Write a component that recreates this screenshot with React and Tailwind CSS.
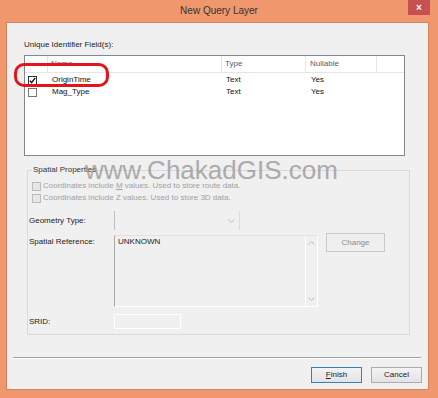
import React from 'react'

function Check({ checked, dark }) {
  return (
    <div className={`w-[9px] h-[9px] border bg-white flex items-center justify-center ${dark ? 'border-[#333]' : 'border-[#777]'}`}>
      {checked && (
        <svg width="7" height="7" viewBox="0 0 7 7">
          <polyline points="0.8,3.6 2.6,5.6 6.2,0.8" fill="none" stroke="#111" strokeWidth="1.4" />
        </svg>
      )}
    </div>
  )
}

function Chevron({ up }) {
  return (
    <svg width="7" height="4" viewBox="0 0 7 4">
      <polyline points={up ? '0.5,3.5 3.5,0.5 6.5,3.5' : '0.5,0.5 3.5,3.5 6.5,0.5'} fill="none" stroke="#b8b8b8" strokeWidth="1" />
    </svg>
  )
}

export default function App(){
  const rows = [
    { name: 'OriginTime', type: 'Text', nul: 'Yes', checked: true },
    { name: 'Mag_Type', type: 'Text', nul: 'Yes', checked: false },
  ]

  return (
    <div className="w-[438px] h-[398px] bg-[#f0976e] flex flex-col relative overflow-hidden font-['Liberation_Sans',Arial,sans-serif] text-[8px] leading-[10px] text-[#111]">
      {/* title bar */}
      <div className="h-[22px] flex items-center justify-center relative">
        <span className="text-[10px] leading-[12px] text-[#333]">New Query Layer</span>
        <div className="absolute right-[8px] top-0 w-[22px] h-[15px] bg-[#c75050] flex items-center justify-center text-white text-[10px] leading-[10px] font-bold">×</div>
      </div>

      <div className="flex flex-1">
        <div className="w-[6px]" />
        <div className="w-[423px] h-[368px] bg-[#f0f0f0] border border-[#d4845e] flex flex-col">
          <div className="ml-[17px] mt-[17px] text-[#222]">Unique Identifier Field(s):</div>

          {/* fields table */}
          <div className="relative ml-[17px] mt-[5px] w-[381px] h-[101px] border border-[#828790] bg-white">
            <div className="flex h-[17px] border-b border-[#e5e5e5] text-[#4c607a]">
              <div className="w-[23px] border-r border-[#e5e5e5]" />
              <div className="w-[174px] border-r border-[#e5e5e5] flex items-center pl-[3px]">Name</div>
              <div className="w-[84px] border-r border-[#e5e5e5] flex items-center pl-[3px]">Type</div>
              <div className="w-[71px] border-r border-[#e5e5e5] flex items-center pl-[4px]">Nullable</div>
              <div className="flex-1" />
            </div>
            <div className="pt-[1px]">
              {rows.map(r => (
                <div key={r.name} className="flex h-[12px] items-center">
                  <div className="w-[23px] pl-[3px]"><Check checked={r.checked} dark={r.checked} /></div>
                  <div className="w-[174px] pl-[4px]">{r.name}</div>
                  <div className="w-[84px] pl-[4px]">{r.type}</div>
                  <div className="w-[71px] pl-[5px]">{r.nul}</div>
                </div>
              ))}
            </div>
            <div className="absolute left-[-11px] top-[7px] w-[95px] h-[24px] border-[3px] border-[#e3151a] rounded-[10px]" />
          </div>

          {/* spatial properties */}
          <fieldset className="ml-[20px] mt-[9px] w-[383px] border border-[#d9d9d9] pb-[5px] flex flex-col">
            <legend className="ml-[4px] px-[1px] text-[#333] leading-[10px]">Spatial Properties</legend>
            <div className="flex items-center h-[12px] mt-[5px] ml-[4px] text-[#a0a0a0]">
              <div className="w-[9px] h-[9px] border border-[#bcbcbc] bg-[#e6e6e6]" />
              <span className="ml-[2px]">Coordinates include <span className="underline">M</span> values. Used to store route data.</span>
            </div>
            <div className="flex items-center h-[12px] ml-[4px] text-[#a0a0a0]">
              <div className="w-[9px] h-[9px] border border-[#bcbcbc] bg-[#e6e6e6]" />
              <span className="ml-[2px]">Coordinates include Z values. Used to store 3D data.</span>
            </div>

            <div className="flex items-center mt-[7px] h-[19px]">
              <div className="w-[86px] pl-[1px] text-[#222]">Geometry Type:</div>
              <div className="w-[126px] h-[19px] border-l border-[#bdbdbd] border-r border-r-[#dcdcdc] flex items-center justify-end pr-[4px]">
                <Chevron />
              </div>
            </div>

            <div className="flex items-start mt-[3px]">
              <div className="w-[86px] pl-[1px] mt-[4px] text-[#222]">Spatial Reference:</div>
              <div className="mt-[2px] w-[204px] h-[72px] border border-white border-l-[#a9a9a9] border-t-[#e2e2e2] flex">
                <div className="flex-1 pl-[3px] pt-[1px] text-[#222]">UNKNOWN</div>
                <div className="w-[12px] border-l border-white flex flex-col items-center justify-between py-[5px]">
                  <Chevron up />
                  <Chevron />
                </div>
              </div>
              <div className="ml-[8px] w-[59px] h-[19px] border border-[#c9c9c9] bg-[#efefef] flex items-center justify-center text-[#8c8c8c]">Change</div>
            </div>

            <div className="flex items-center mt-[7px] h-[15px]">
              <div className="w-[86px] pl-[1px] text-[#222]">SRID:</div>
              <div className="w-[67px] h-[15px] border border-white" />
            </div>
          </fieldset>

          <div className="ml-[6px] mt-[22px] w-[408px] h-[2px] border-t border-[#a0a0a0] border-b border-b-white" />

          <div className="flex justify-end gap-[9px] mt-[8px] pr-[6px]">
            <div className="w-[51px] h-[16px] border border-[#3c7fb1] bg-gradient-to-b from-[#f3f3f3] to-[#e3e3e3] flex items-center justify-center text-[#222]">
              <span><span className="underline">F</span>inish</span>
            </div>
            <div className="w-[51px] h-[16px] border border-[#acacac] bg-gradient-to-b from-[#f3f3f3] to-[#e3e3e3] flex items-center justify-center text-[#222]">Cancel</div>
          </div>
        </div>
      </div>

      <div className="absolute left-[85px] top-[157px] text-[26px] leading-[26px] text-[#9a9a9a] opacity-80 pointer-events-none">www.ChakadGIS.com</div>
    </div>
  )
}
